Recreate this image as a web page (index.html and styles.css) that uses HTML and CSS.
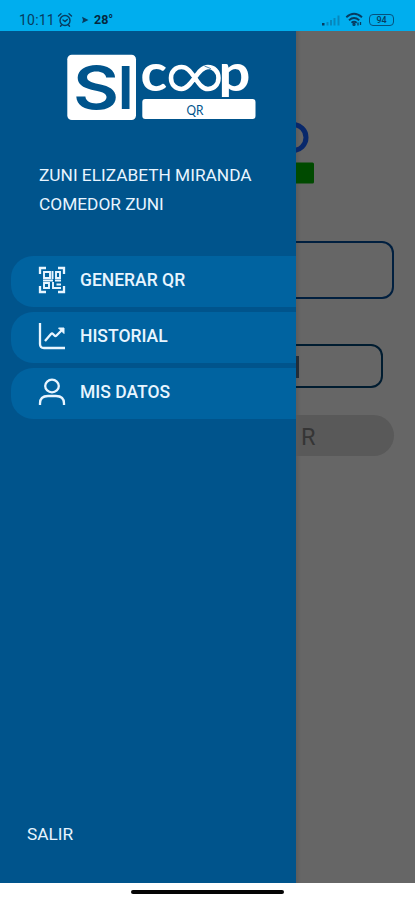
FILE: index.html
```html
<!DOCTYPE html>
<html lang="es">
<head>
<meta charset="utf-8">
<title>SI coop QR</title>
<link rel="stylesheet" href="styles.css">
</head>
<body>
<header class="status">
  <span class="clock">10:11</span>
  <svg class="alarm" width="16" height="16" viewBox="0 0 16 16" fill="none" stroke="currentColor" stroke-width="1.4" stroke-linecap="round"><circle cx="8" cy="8.5" r="5"/><path d="M1.5 4L4 1.8M14.500 4L12 1.800M4.500 13L3.500 14.300M11.500 13l1 1.300M6 8l2 1.500 2.300-2"/></svg>
  <svg class="arrow" width="8" height="8" viewBox="0 0 8 8"><path d="M1 .8L7.500 4 1 7.200 2 4z" fill="currentColor"/></svg>
  <span class="temp">28°</span>
  <svg class="signal" width="20" height="14" viewBox="0 0 20 14"><path d="M1 10h2.500v2.500H1z" fill="#073c60"/><path d="M5.500 9h2v3.500h-2zM9 7h2v5.500H9zM12.500 5h2v7.500h-2zM16.500 2.500h2v10h-2z" fill="#0787bd"/></svg>
  <svg class="wifi" width="19" height="15" viewBox="0 0 19 15" fill="none" stroke="currentColor" stroke-width="1.900"><path d="M1.300 5.200Q9-1.700 17 5.200M4 8.200Q9 3.800 14.200 8.200M6.500 10.700Q9 8.700 11.700 10.700"/><circle cx="9" cy="12.400" r=".7"/><path d="M13 10.500v3M15.500 10v3" stroke-width="1.300"/></svg>
  <span class="battery">94</span>
</header>
<div class="screen">
  <nav class="drawer">
    <svg class="logo" width="190" height="67" viewBox="67 54 190 67">
      <rect x="67.300" y="54.800" width="68.700" height="65.200" rx="4.500" fill="#fff"/>
      <g class="logo-si" fill="#00548c">
        <text transform="translate(73 109) scale(1.200 1)">S</text>
        <text transform="translate(117.500 109)">I</text>
      </g>
      <g class="logo-word" fill="#fff">
        <text transform="translate(140.500 91) scale(1.080 1)">c</text>
        <svg x="217" y="60" width="38" height="37" viewBox="217 60 38 37"><text transform="translate(218.500 91) scale(1.100 1)">p</text></svg>
      </g>
      <path d="M195 78C190 71 187 67 181.500 67C175.500 67 171 71.500 171 78S175.500 89 181.500 89C192 89 197 67 208 67C214 67 218.500 71.500 218.500 78S214 89 208 89C202.500 89 199 84 195 78Z" fill="none" stroke="#fff" stroke-width="4.600"/>
      <path d="M204.500 66l6 2.500-3 4" fill="none" stroke="#00548c" stroke-width=".7"/>
      <rect x="142.300" y="99" width="113.200" height="20" rx="3" fill="#fff"/>
      <text class="logo-qr" x="186.500" y="114.500" textLength="17" lengthAdjust="spacingAndGlyphs">QR</text>
    </svg>
    <div class="user"><p>ZUNI ELIZABETH MIRANDA</p><p>COMEDOR ZUNI</p></div>
    <ul class="menu">
      <li>
        <svg width="28" height="28" viewBox="0 0 28 28" fill="none" stroke="currentColor" stroke-width="2.300"><path d="M2 8V2h6M20 2h6v6M26 20v6h-6M8 26H2v-6"/><path d="M6 6h6v6H6zM6 17h5v5H6zM18 6h4v6h-4zM14.500 5v8M5 14.500h10M17 14.500h6M15 16v6h8M18.500 18.500H23" stroke-width="1.900"/></svg>
        <span>GENERAR QR</span>
      </li>
      <li>
        <svg width="28" height="28" viewBox="0 0 28 28" fill="none" stroke="currentColor" stroke-width="2.300"><path d="M2 1v21q0 4 4 4h21M7 19l6-7q1-1 2 0l1.500 1.500q1 1 2 0L24 8"/><path d="M20.500 6H26v5.500z" fill="currentColor" stroke-width="1"/></svg>
        <span>HISTORIAL</span>
      </li>
      <li>
        <svg width="28" height="28" viewBox="0 0 28 28" fill="none" stroke="currentColor" stroke-width="2.300"><ellipse cx="14" cy="8" rx="6.800" ry="6.300"/><path d="M2 27v-1.500q0-7.500 8-7.500h8q8 0 8 7.500V27"/></svg>
        <span>MIS DATOS</span>
      </li>
    </ul>
    <a class="logout">SALIR</a>
  </nav>
  <main class="page">
    <svg class="page-logo" width="22" height="64" viewBox="0 0 22 64"><circle cx="-3" cy="17.500" r="13" fill="none" stroke="#08286b" stroke-width="5"/><rect x="-10" y="42.500" width="28" height="21" rx="1.500" fill="#004a00"/></svg>
    <div class="field field-large"></div>
    <div class="field field-small"><i class="caret"></i></div>
    <div class="button">R</div>
  </main>
</div>
<footer class="gesture"><i></i></footer>
</body>
</html>
```
FILE: styles.css
```css
* { box-sizing: border-box; }
body {
  margin: 0;
  width: 415px;
  height: 900px;
  display: flex;
  flex-direction: column;
  overflow: hidden;
  background: #fff;
  font-family: Roboto, sans-serif;
}
.status {
  height: 31px;
  flex: none;
  display: flex;
  align-items: center;
  padding: 8px 21px 0 19px;
  background: #00aeee;
  color: #073c60;
}
.clock { width: 36px; font-size: 14px; letter-spacing: .2px; }
.alarm { margin-left: 2px; }
.arrow { margin-left: 8px; }
.temp { margin-left: 5px; font-size: 12.5px; font-weight: 700; color: #05283f; }
.signal { margin-left: auto; }
.wifi { margin-left: 4px; }
.battery {
  width: 25px;
  height: 12px;
  margin-left: 5px;
  border: 1.5px solid #07517d;
  border-radius: 4px;
  font-size: 9px;
  font-weight: 500;
  line-height: 10px;
  text-align: center;
}
.screen { height: 852px; flex: none; display: flex; }
.drawer {
  width: 296px;
  flex: none;
  display: flex;
  flex-direction: column;
  align-items: flex-start;
  padding-top: 23px;
  background: #00548c;
  color: #e8f5ff;
}
.logo { margin-left: 67px; flex: none; }
.logo-si { font: 600 59px Inter, sans-serif; }
.logo-word { font: 700 51px Lato, sans-serif; }
.logo-qr { font: 400 14px Lato, sans-serif; fill: #00548c; }
.user { margin: 40px 0 0 39px; font-size: 17.3px; line-height: 28.5px; white-space: nowrap; }
.user p { margin: 0; }
.menu {
  width: 285px;
  margin: 38px 0 0 11px;
  padding: 0;
  display: flex;
  flex-direction: column;
  gap: 5px;
  list-style: none;
}
.menu li {
  height: 51px;
  display: flex;
  align-items: center;
  gap: 14px;
  padding: 0 0 4px 27px;
  border-radius: 22px 0 0 22px;
  background: #0063a0;
  font-size: 17.5px;
  font-weight: 500;
}
.logout { margin: auto 0 39px 27px; font-size: 17.3px; line-height: 20px; }
.page {
  flex: 1;
  display: flex;
  flex-direction: column;
  align-items: flex-start;
  padding-top: 89px;
  background: linear-gradient(90deg, #5c5c5c, #666 5px);
}
.page-logo { flex: none; }
.field { border: 2.5px solid #001f3f; border-left: 0; }
.field-large { width: 98px; height: 58px; margin-top: 57px; border-radius: 0 12px 12px 0; }
.field-small {
  width: 87px;
  height: 44px;
  margin-top: 45px;
  padding-top: 10px;
  border-color: #001c30;
  border-radius: 0 12px 12px 0;
}
.caret { display: block; width: 3px; height: 22px; background: #222d38; }
.button {
  width: 98px;
  height: 41px;
  margin-top: 27px;
  padding-left: 5px;
  border-radius: 0 21px 21px 0;
  background: #595959;
  color: #353535;
  font-size: 23.5px;
  font-weight: 400;
  line-height: 45px;
}
.gesture { flex: 1; display: flex; justify-content: center; padding-top: 7px; }
.gesture i { width: 153px; height: 4px; border-radius: 2px; background: #050505; }
```
